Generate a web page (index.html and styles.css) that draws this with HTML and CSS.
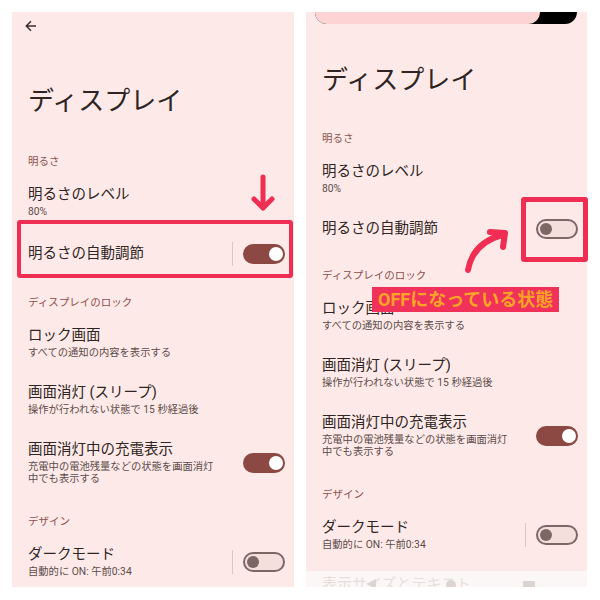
FILE: index.html
```html
<!DOCTYPE html>
<html lang="ja">
<head>
    <meta charset="UTF-8">
    <meta name="viewport" content="width=device-width, initial-scale=1.0">
    <title>ディスプレイ</title>
    <link rel="stylesheet" href="styles.css">
</head>
<body>
    <div class="screens">
        <!-- 左: ON の状態 -->
        <div class="panel">
            <div class="topbar">
                <svg width="12" height="12" viewBox="0 0 12 12"><path d="M11 6H1.5M6 1.3L1.3 6 6 10.7" fill="none" stroke="#3a2e2d" stroke-width="1.5"/></svg>
            </div>
            <h1 class="title">ディスプレイ</h1>
            <div class="section">明るさ</div>
            <div class="item">
                <div class="text"><div class="name">明るさのレベル</div><div class="sum">80%</div></div>
            </div>
            <div class="item">
                <div class="text"><div class="name">明るさの自動調節</div></div>
                <span class="divider"></span><span class="switch on"></span>
            </div>
            <div class="section">ディスプレイのロック</div>
            <div class="item">
                <div class="text"><div class="name">ロック画面</div><div class="sum">すべての通知の内容を表示する</div></div>
            </div>
            <div class="item">
                <div class="text"><div class="name">画面消灯 (スリープ)</div><div class="sum">操作が行われない状態で 15 秒経過後</div></div>
            </div>
            <div class="item">
                <div class="text"><div class="name">画面消灯中の充電表示</div><div class="sum">充電中の電池残量などの状態を画面消灯中でも表示する</div></div>
                <span class="switch on"></span>
            </div>
            <div class="section">デザイン</div>
            <div class="item">
                <div class="text"><div class="name">ダークモード</div><div class="sum">自動的に ON: 午前0:34</div></div>
                <span class="divider"></span><span class="switch"></span>
            </div>

            <div class="mark-box"></div>
            <svg class="arrow-down" width="30" height="40" viewBox="0 0 30 40"><path d="M15 5V36M6 27L15 36 24 27" fill="none" stroke="#f02d52" stroke-width="5" stroke-linecap="round" stroke-linejoin="round"/></svg>
        </div>

        <!-- 右: OFF の状態 -->
        <div class="panel right">
            <div class="shade"><div class="shade-fill"></div></div>
            <h1 class="title">ディスプレイ</h1>
            <div class="section">明るさ</div>
            <div class="item">
                <div class="text"><div class="name">明るさのレベル</div><div class="sum">80%</div></div>
            </div>
            <div class="item">
                <div class="text"><div class="name">明るさの自動調節</div></div>
                <span class="switch"></span>
            </div>
            <div class="section">ディスプレイのロック</div>
            <div class="item">
                <div class="text"><div class="name">ロック画面</div><div class="sum">すべての通知の内容を表示する</div></div>
            </div>
            <div class="item">
                <div class="text"><div class="name">画面消灯 (スリープ)</div><div class="sum">操作が行われない状態で 15 秒経過後</div></div>
            </div>
            <div class="item">
                <div class="text"><div class="name">画面消灯中の充電表示</div><div class="sum">充電中の電池残量などの状態を画面消灯中でも表示する</div></div>
                <span class="switch on"></span>
            </div>
            <div class="section">デザイン</div>
            <div class="item">
                <div class="text"><div class="name">ダークモード</div><div class="sum">自動的に ON: 午前0:34</div></div>
                <span class="divider"></span><span class="switch"></span>
            </div>
            <div class="navstrip">
                <div class="next">表示サイズとテキスト</div>
                <svg class="navkeys" width="180" height="12" viewBox="0 0 180 12"><path d="M12 4L2 9 12 14Z" fill="#ddd3d2"/><circle cx="87" cy="10" r="5" fill="#ddd3d2"/><rect x="159" y="6" width="12" height="10" rx="1" fill="#ddd3d2"/></svg>
            </div>

            <div class="mark-box off"></div>
            <svg class="arrow-curve" width="60" height="55" viewBox="0 0 60 55"><path d="M12 43Q17 16 46 8M34 5L49 6 47 20" fill="none" stroke="#f02d52" stroke-width="6" stroke-linecap="round" stroke-linejoin="round"/></svg>
            <div class="label">OFFになっている状態</div>
        </div>
    </div>
</body>
</html>
```

FILE: styles.css
```css
body { margin: 0; background: #fff; font-family: Roboto, "Noto Sans CJK JP", sans-serif; }
.screens { display: flex; gap: 12px; padding: 12px 0 0 12px; }
.panel { position: relative; width: 282px; height: 575px; background: #fdeae8; display: flex; flex-direction: column; }
.panel.right { width: 281px; }

.topbar { height: 28px; display: flex; align-items: center; padding-left: 13px; }
.shade { height: 12px; margin: 0 10px 0 9px; background: #000; border-radius: 0 0 12px 12px; overflow: hidden; display: flex; }
.shade-fill { width: 225px; background: #fdd4d3; border-radius: 0 0 12px 0; }

.title { margin: 45px 0 8px 16px; font-size: 26px; line-height: 32px; font-weight: 400; color: #2e2423; }
.right .title { margin: 40px 0 6px 16px; }
.section { margin: 29px 0 15px 16px; font-size: 10.5px; line-height: 16px; color: #8d4f4c; }

.item { display: flex; align-items: center; padding: 0 9px 0 16px; }
.item + .item { margin-top: 24px; }
.text { flex: 1; }
.name { font-size: 14.5px; line-height: 20px; color: #2e2423; }
.sum { margin-top: 1px; font-size: 10.3px; line-height: 12px; color: #5c4a48; max-width: 190px; }
.divider { width: 1px; height: 24px; background: #dcc6c3; margin-right: 10px; }

.switch { position: relative; width: 42px; height: 20px; box-sizing: border-box; border-radius: 10px; border: 2px solid #7c6765; background: #f4dfdd; flex-shrink: 0; }
.switch::after { content: ""; position: absolute; left: 2px; top: 2px; width: 12px; height: 12px; border-radius: 50%; background: #7c6765; }
.switch.on { border-color: #8c4843; background: #8c4843; }
.switch.on::after { left: auto; right: 0; top: 1px; width: 14px; height: 14px; background: #fff; }

.navstrip { position: relative; margin-top: auto; height: 16px; background: #fcf7f7; overflow: hidden; }
.next { padding: 3px 0 0 16px; font-size: 15px; line-height: 20px; color: #e8dedd; }
.navkeys { position: absolute; left: 58px; top: 4px; }

.mark-box { position: absolute; left: 5px; top: 208px; width: 276px; height: 58px; box-sizing: border-box; border: 4px solid #f02d52; border-radius: 3px; }
.mark-box.off { left: 215px; top: 185px; width: 67px; height: 65px; border-width: 5px; }
.arrow-down { position: absolute; left: 236px; top: 160px; }
.arrow-curve { position: absolute; left: 150px; top: 215px; }
.label { position: absolute; left: 66px; top: 275px; padding: 0 6px; background: #f0325a; color: #ffa326; font-size: 18px; line-height: 25px; font-weight: 700; white-space: nowrap; }
```
